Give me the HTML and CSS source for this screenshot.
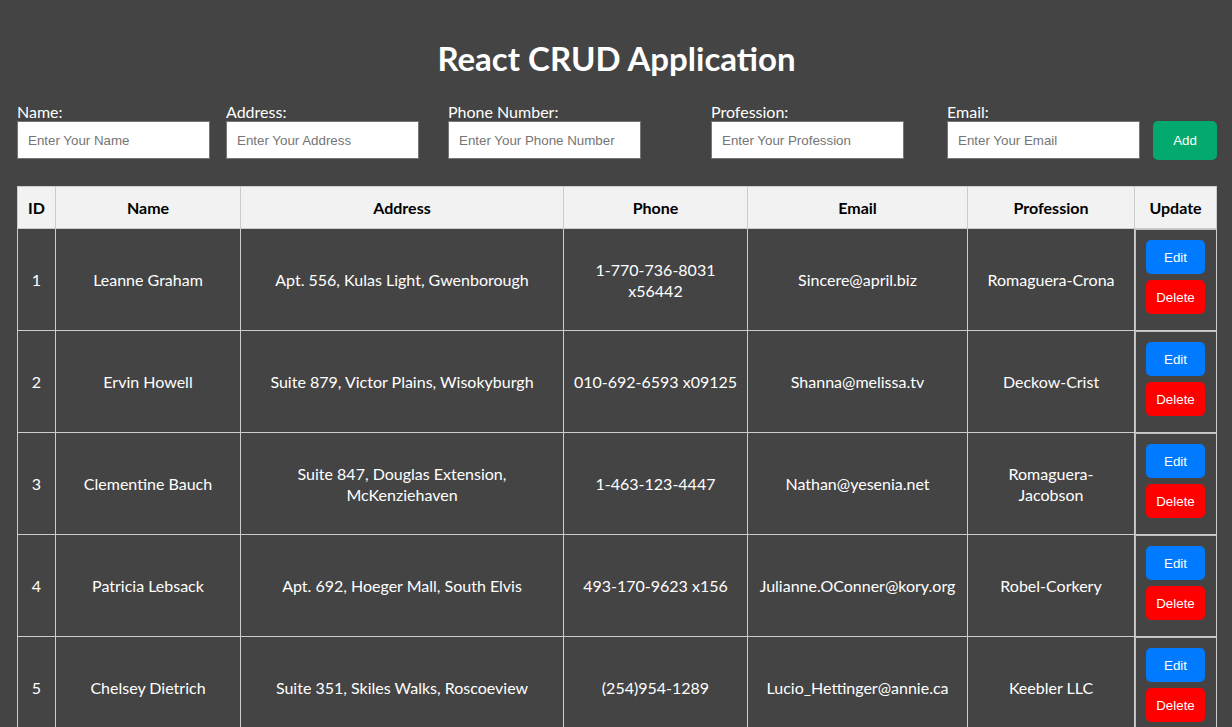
FILE: index.html
```html
<!DOCTYPE html>
<html lang="en">
<head>
<meta charset="utf-8">
<title>React CRUD Application</title>
<link rel="stylesheet" href="styles.css">
</head>
<body>
<div class="app">
  <h1 class="title">React CRUD Application</h1>
  <form class="form">
    <div class="field f-name">
      <label>Name:</label>
      <input type="text" placeholder="Enter Your Name">
    </div>
    <div class="field f-address">
      <label>Address:</label>
      <input type="text" placeholder="Enter Your Address">
    </div>
    <div class="field f-phone">
      <label>Phone Number:</label>
      <input type="text" placeholder="Enter Your Phone Number">
    </div>
    <div class="field f-prof">
      <label>Profession:</label>
      <input type="text" placeholder="Enter Your Profession">
    </div>
    <div class="field f-email">
      <label>Email:</label>
      <input type="text" placeholder="Enter Your Email">
    </div>
    <button type="button" class="btn-add">Add</button>
  </form>

  <table class="users">
    <colgroup>
      <col class="c-id"><col class="c-name"><col class="c-address"><col class="c-phone"><col class="c-email"><col class="c-prof"><col class="c-update">
    </colgroup>
    <thead>
      <tr><th>ID</th><th>Name</th><th>Address</th><th>Phone</th><th>Email</th><th>Profession</th><th>Update</th></tr>
    </thead>
    <tbody>
      <tr>
        <td>1</td><td>Leanne Graham</td><td>Apt. 556, Kulas Light, Gwenborough</td><td>1-770-736-8031 x56442</td><td>Sincere@april.biz</td><td class="prof">Romaguera-Crona</td>
        <td class="update"><button type="button" class="btn btn-edit">Edit</button><button type="button" class="btn btn-delete">Delete</button></td>
      </tr>
      <tr>
        <td>2</td><td>Ervin Howell</td><td>Suite 879, Victor Plains, Wisokyburgh</td><td>010-692-6593 x09125</td><td>Shanna@melissa.tv</td><td class="prof">Deckow-Crist</td>
        <td class="update"><button type="button" class="btn btn-edit">Edit</button><button type="button" class="btn btn-delete">Delete</button></td>
      </tr>
      <tr>
        <td>3</td><td>Clementine Bauch</td><td>Suite 847, Douglas Extension, McKenziehaven</td><td>1-463-123-4447</td><td>Nathan@yesenia.net</td><td class="prof">Romaguera-Jacobson</td>
        <td class="update"><button type="button" class="btn btn-edit">Edit</button><button type="button" class="btn btn-delete">Delete</button></td>
      </tr>
      <tr>
        <td>4</td><td>Patricia Lebsack</td><td>Apt. 692, Hoeger Mall, South Elvis</td><td>493-170-9623 x156</td><td>Julianne.OConner@kory.org</td><td class="prof">Robel-Corkery</td>
        <td class="update"><button type="button" class="btn btn-edit">Edit</button><button type="button" class="btn btn-delete">Delete</button></td>
      </tr>
      <tr>
        <td>5</td><td>Chelsey Dietrich</td><td>Suite 351, Skiles Walks, Roscoeview</td><td>(254)954-1289</td><td>Lucio_Hettinger@annie.ca</td><td class="prof">Keebler LLC</td>
        <td class="update"><button type="button" class="btn btn-edit">Edit</button><button type="button" class="btn btn-delete">Delete</button></td>
      </tr>
    </tbody>
  </table>
</div>
</body>
</html>
```
FILE: styles.css
```css
* { box-sizing: border-box; }

html, body {
  margin: 0;
  background: #444444;
}

body {
  font-family: "Lato", "Open Sans", sans-serif;
  font-size: 16px;
  line-height: 21px;
  color: #ffffff;
}

.app {
  padding: 0 16px 40px 17px;
}

.title {
  margin: 0;
  padding: 38px 0 24px;
  text-align: center;
  font-size: 33px;
  line-height: 40px;
  font-weight: 700;
  color: #ffffff;
}

.form {
  display: grid;
  grid-template-columns: 209px 222px 263px 236px 206px 64px;
  align-items: end;
  margin-bottom: 27px;
}

.field {
  display: flex;
  flex-direction: column;
}

.field label {
  font-size: 16px;
  line-height: 19px;
  color: #ffffff;
}

.field input {
  width: 193px;
  height: 38px;
  padding: 0 10px;
  border: 1px solid #767676;
  background: #ffffff;
  font-family: "Liberation Sans", Arial, sans-serif;
  font-size: 13.33px;
  color: #222;
  outline: none;
}

.field input::placeholder {
  color: #757575;
}

.btn-add {
  width: 64px;
  height: 39px;
  margin-bottom: -1px;
  border: none;
  border-radius: 5px;
  background: #04aa6d;
  color: #ffffff;
  font-family: "Liberation Sans", Arial, sans-serif;
  font-size: 13.33px;
}

.users {
  width: 1199px;
  border-collapse: collapse;
  table-layout: fixed;
}

.c-id { width: 38px; }
.c-name { width: 185px; }
.c-address { width: 323px; }
.c-phone { width: 184px; }
.c-email { width: 220px; }
.c-prof { width: 167px; }
.c-update { width: 82px; }

.users th,
.users td {
  border: 1px solid #cccccc;
  text-align: center;
  vertical-align: middle;
  padding: 10px 8px;
}

.users th {
  background: #f2f2f2;
  color: #000000;
  font-weight: 700;
  height: 42px;
}

.users td {
  color: #ffffff;
}

.users td.prof {
  padding: 10px 12px;
}

.users td.update {
  padding: 11px 10px 16px 11px;
  box-shadow: inset 1px 1px 0 #bdbdbd;
}

.btn {
  display: block;
  width: 59px;
  height: 34px;
  border: none;
  border-radius: 5px;
  color: #ffffff;
  font-family: "Liberation Sans", Arial, sans-serif;
  font-size: 13.33px;
}

.btn-edit {
  background: #007bff;
  margin-bottom: 6px;
}

.btn-delete {
  background: #ff0000;
}
```
